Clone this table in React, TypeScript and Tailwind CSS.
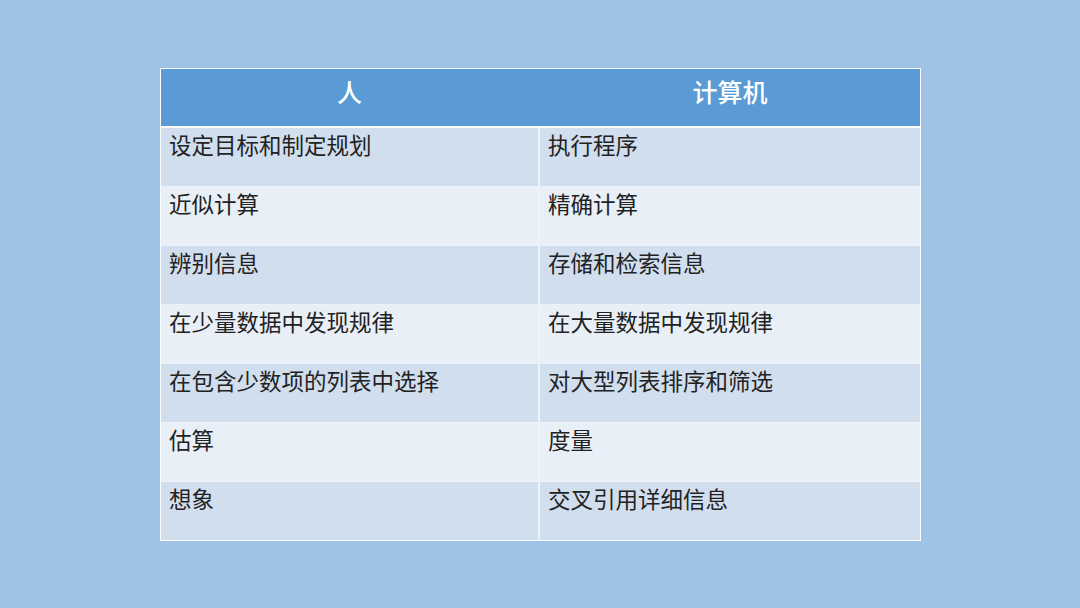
const rows: [string, string][] = [
  ["设定目标和制定规划", "执行程序"],
  ["近似计算", "精确计算"],
  ["辨别信息", "存储和检索信息"],
  ["在少量数据中发现规律", "在大量数据中发现规律"],
  ["在包含少数项的列表中选择", "对大型列表排序和筛选"],
  ["估算", "度量"],
  ["想象", "交叉引用详细信息"],
];

export default function App() {
  return (
    <div
      className="w-[1080px] h-[608px] bg-[#9fc2e7] pt-[68px] pl-[160px]"
      style={{ fontFamily: '"Noto Sans CJK SC", "Noto Sans", sans-serif' }}
    >
      <div className="w-[761px] border border-white/80 bg-white/80">
        <div className="grid grid-cols-[377px_1fr] gap-x-[2px] h-[57px] bg-[#5b9bd5]">
          <div className="bg-[#5b9bd5] text-white text-[25px] leading-[34px] font-medium flex justify-center pt-[5px]">
            人
          </div>
          <div className="bg-[#5b9bd5] text-white text-[25px] leading-[34px] font-medium flex justify-center pt-[5px]">
            计算机
          </div>
        </div>
        <div className="h-[2px] bg-white" />
        {rows.map(([a, b], i) => (
          <div
            key={i}
            className={`grid grid-cols-[377px_1fr] gap-x-[2px] h-[58px] ${i > 0 ? "mt-px" : ""}`}
          >
            <div
              className={`${i % 2 === 0 ? "bg-[#d1deee]" : "bg-[#e9eff7]"} text-[#222] text-[22.5px] leading-[30px] pl-[8px] pt-px`}
            >
              {a}
            </div>
            <div
              className={`${i % 2 === 0 ? "bg-[#d1deee]" : "bg-[#e9eff7]"} text-[#222] text-[22.5px] leading-[30px] pl-[8px] pt-px`}
            >
              {b}
            </div>
          </div>
        ))}
      </div>
    </div>
  );
}
